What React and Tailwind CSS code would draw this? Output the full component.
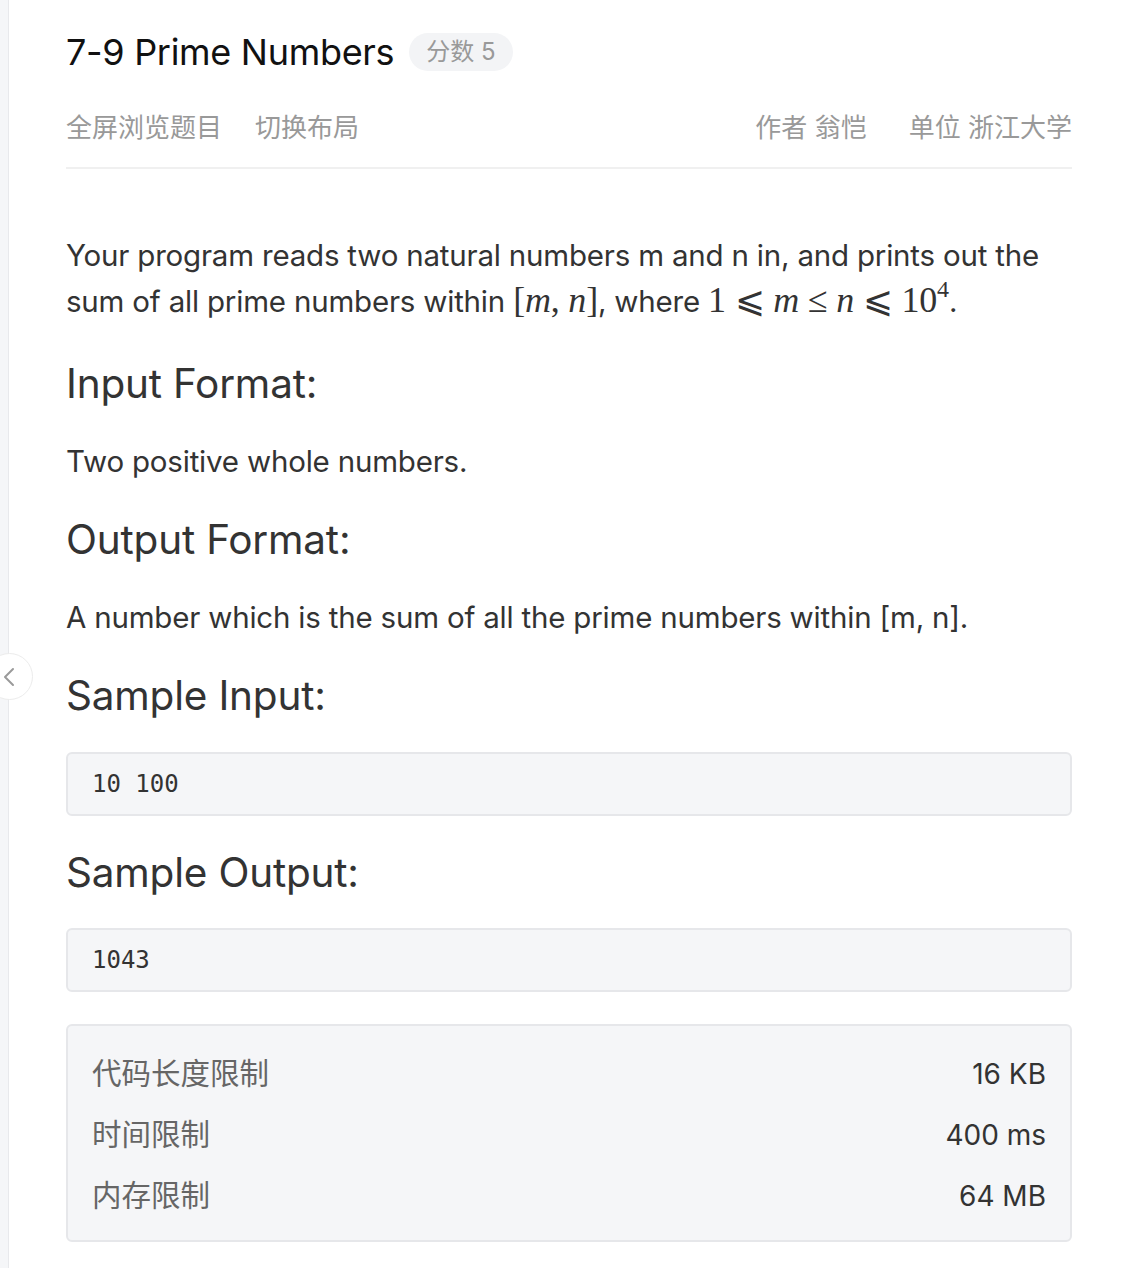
import React from 'react';

const sans = { fontFamily: 'Inter, "Noto Sans CJK SC", sans-serif' };

const limits = [
  { label: '代码长度限制', value: '16 KB' },
  { label: '时间限制', value: '400 ms' },
  { label: '内存限制', value: '64 MB' },
];

const Heading = ({ children, className = '' }) => (
  <h2 className={`text-[40.5px] leading-[48px] text-[#333] font-normal tracking-[-0.2px] ${className}`}>{children}</h2>
);

const Para = ({ children, className = '' }) => (
  <p className={`text-[29.5px] leading-[45px] text-[#333] tracking-[-0.2px] ${className}`}>{children}</p>
);

const CodeBox = ({ children, className = '' }) => (
  <pre
    className={`h-[64px] flex items-center px-[24px] bg-[#f5f6f8] border-2 border-[#e6e7ea] rounded-md text-[24px] text-[#333] ${className}`}
    style={{ fontFamily: '"DejaVu Sans Mono", monospace' }}
  >
    {children}
  </pre>
);

const M = ({ children, italic }) => (
  <span
    className={`text-[36px] ${italic ? 'italic' : ''}`}
    style={{ fontFamily: '"Liberation Serif", serif' }}
  >
    {children}
  </span>
);

export default function App() {
  return (
    <div className="relative flex min-h-[1268px] bg-white" style={sans}>
      {/* collapsed side panel */}
      <div className="w-[9px] shrink-0 bg-[#f5f6f8] border-r border-[#e8e9ec]" />
      <button className="absolute left-[-14px] top-[653px] w-[47px] h-[47px] rounded-full bg-white border border-[#ececec] flex items-center justify-end pr-[17px] text-[#9a9a9a]">
        <svg width="12" height="20" viewBox="0 0 12 20" fill="none" stroke="currentColor" strokeWidth="2" strokeLinecap="round" strokeLinejoin="round">
          <path d="M10 2 L2 10 L10 18" />
        </svg>
      </button>

      <main className="flex-1 pl-[57px] pr-[55px]">
        <div className="mt-[33px] flex items-center h-[38px] gap-[15px]">
          <h1 className="text-[36px] leading-none text-[#111] font-normal tracking-[-0.3px]">7-9 Prime Numbers</h1>
          <span className="h-[38px] px-[17px] flex items-center rounded-full bg-[#f3f4f6] text-[24px] text-[#999]">分数 5</span>
        </div>

        <div className="mt-[39px] pb-[21px] border-b-2 border-[#f0f0f0] flex justify-between text-[26px] leading-[36px] text-[#999]">
          <div className="flex gap-[33px]">
            <span>全屏浏览题目</span>
            <span>切换布局</span>
          </div>
          <div className="flex gap-[42px]">
            <span>作者 翁恺</span>
            <span>单位 浙江大学</span>
          </div>
        </div>

        <Para className="mt-[64px]">
          Your program reads two natural numbers m and n in, and prints out the sum of all prime numbers within{' '}
          <M>[</M><M italic>m</M><M>, </M><M italic>n</M><M>]</M>, where <M>1 ⩽ </M><M italic>m</M><M> ≤ </M>
          <M italic>n</M><M> ⩽ 10<sup className="text-[24px] -top-[15px]">4</sup></M>.
        </Para>

        <Heading className="mt-[36px]">Input Format:</Heading>
        <Para className="mt-[31px]">Two positive whole numbers.</Para>

        <Heading className="mt-[32px]">Output Format:</Heading>
        <Para className="mt-[31px]">A number which is the sum of all the prime numbers within [m, n].</Para>

        <Heading className="mt-[32px]">Sample Input:</Heading>
        <CodeBox className="mt-[32px]">10 100</CodeBox>

        <Heading className="mt-[33px]">Sample Output:</Heading>
        <CodeBox className="mt-[31px]">1043</CodeBox>

        <div className="mt-[32px] h-[218px] bg-[#f5f6f8] border-2 border-[#e6e7ea] rounded-md px-[24px] pt-[17px] flex flex-col">
          {limits.map((l) => (
            <div key={l.label} className="h-[61px] flex items-center justify-between">
              <span className="text-[29.5px] text-[#666]">{l.label}</span>
              <span className="text-[28px] text-[#333]">{l.value}</span>
            </div>
          ))}
        </div>
      </main>
    </div>
  );
}
